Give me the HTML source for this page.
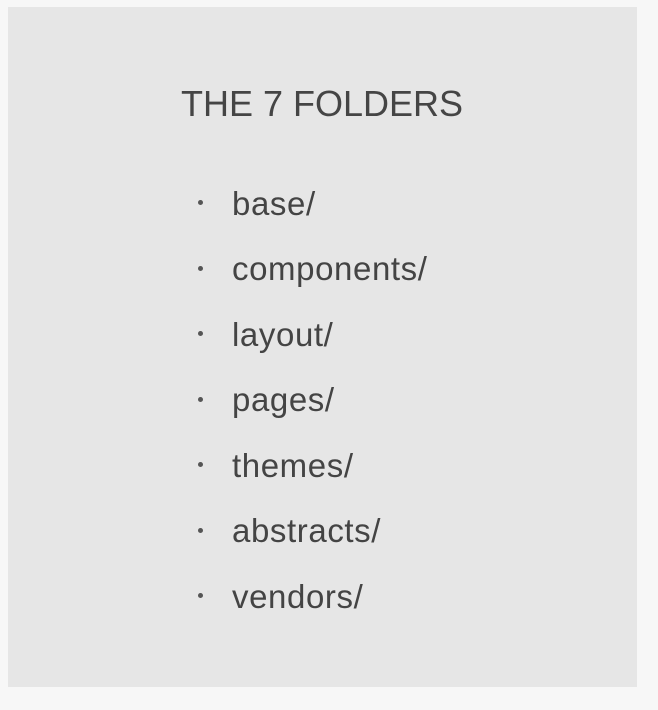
<!DOCTYPE html>
<html><head><style>
html,body{margin:0;padding:0;background:#f7f7f7;width:658px;height:710px;overflow:hidden}
.box{position:absolute;left:8px;top:7px;width:629px;height:680px;background:#e6e6e6}
h1{position:absolute;left:0;width:644px;top:82px;margin:0;text-align:center;font:36px/44px "Liberation Sans",sans-serif;color:#454545;}
.it{position:absolute;left:232px;font:33px/40px "Liberation Sans",sans-serif;color:#444;letter-spacing:0.6px}
.b{position:absolute;left:198px;width:5px;height:5px;border-radius:50%;background:#555}
</style></head><body>
<div class="box"></div>
<h1>THE 7 FOLDERS</h1>
<div class="b" style="top:200px"></div><div class="it" style="top:184px">base/</div>
<div class="b" style="top:266px"></div><div class="it" style="top:249px">components/</div>
<div class="b" style="top:331px"></div><div class="it" style="top:315px">layout/</div>
<div class="b" style="top:397px"></div><div class="it" style="top:380px">pages/</div>
<div class="b" style="top:462px"></div><div class="it" style="top:446px">themes/</div>
<div class="b" style="top:528px"></div><div class="it" style="top:511px">abstracts/</div>
<div class="b" style="top:593px"></div><div class="it" style="top:577px">vendors/</div>
</body></html>
